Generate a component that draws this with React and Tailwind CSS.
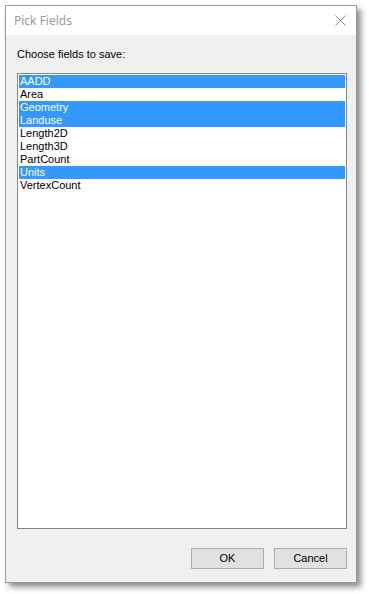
export default function App() {
  const items = [
    ["AADD", true],
    ["Area", false],
    ["Geometry", true],
    ["Landuse", true],
    ["Length2D", false],
    ["Length3D", false],
    ["PartCount", false],
    ["Units", true],
    ["VertexCount", false],
  ];
  return (
    <div className="w-[369px] h-[594px] bg-white pt-[5px] pl-[5px]">
      <div
        className="w-[352px] h-[578px] border border-[#9a9a9a] bg-[#f0f0f0] flex flex-col shadow-[4px_4px_6px_rgba(0,0,0,0.45)]"
        style={{ fontFamily: '"Liberation Sans", Arial, sans-serif' }}
      >
        <div className="h-[29px] bg-white flex items-center justify-between pl-[8px] pr-[10px]">
          <span className="text-[12px] text-[#9a9a9a]" style={{ fontFamily: '"Noto Sans", "Open Sans", sans-serif' }}>
            Pick Fields
          </span>
          <svg width="11" height="11" viewBox="0 0 11 11" className="mb-[1px]">
            <path d="M0.5 0.5 L10.5 10.5 M10.5 0.5 L0.5 10.5" stroke="#8a8a8a" strokeWidth="1" fill="none" />
          </svg>
        </div>
        <div className="flex-1 flex flex-col pl-[11px] pr-[9px]">
          <div className="text-[11px] text-black leading-[13px] mt-[13px]">Choose fields to save:</div>
          <div className="mt-[12px] w-[330px] h-[456px] border border-[#828790] bg-white p-[1px]">
            {items.map(([name, sel]) => (
              <div
                key={name}
                className={
                  "h-[13px] leading-[13px] text-[11px] pl-[1px] " +
                  (sel ? "bg-[#3399ff] text-white" : "text-black")
                }
              >
                {name}
              </div>
            ))}
          </div>
          <div className="flex justify-end gap-[10px] mt-[19px]">
            <button className="w-[73px] h-[21px] bg-[#e1e1e1] border border-[#adadad] text-[11px] text-black">
              OK
            </button>
            <button className="w-[73px] h-[21px] bg-[#e1e1e1] border border-[#adadad] text-[11px] text-black">
              Cancel
            </button>
          </div>
        </div>
      </div>
    </div>
  );
}
